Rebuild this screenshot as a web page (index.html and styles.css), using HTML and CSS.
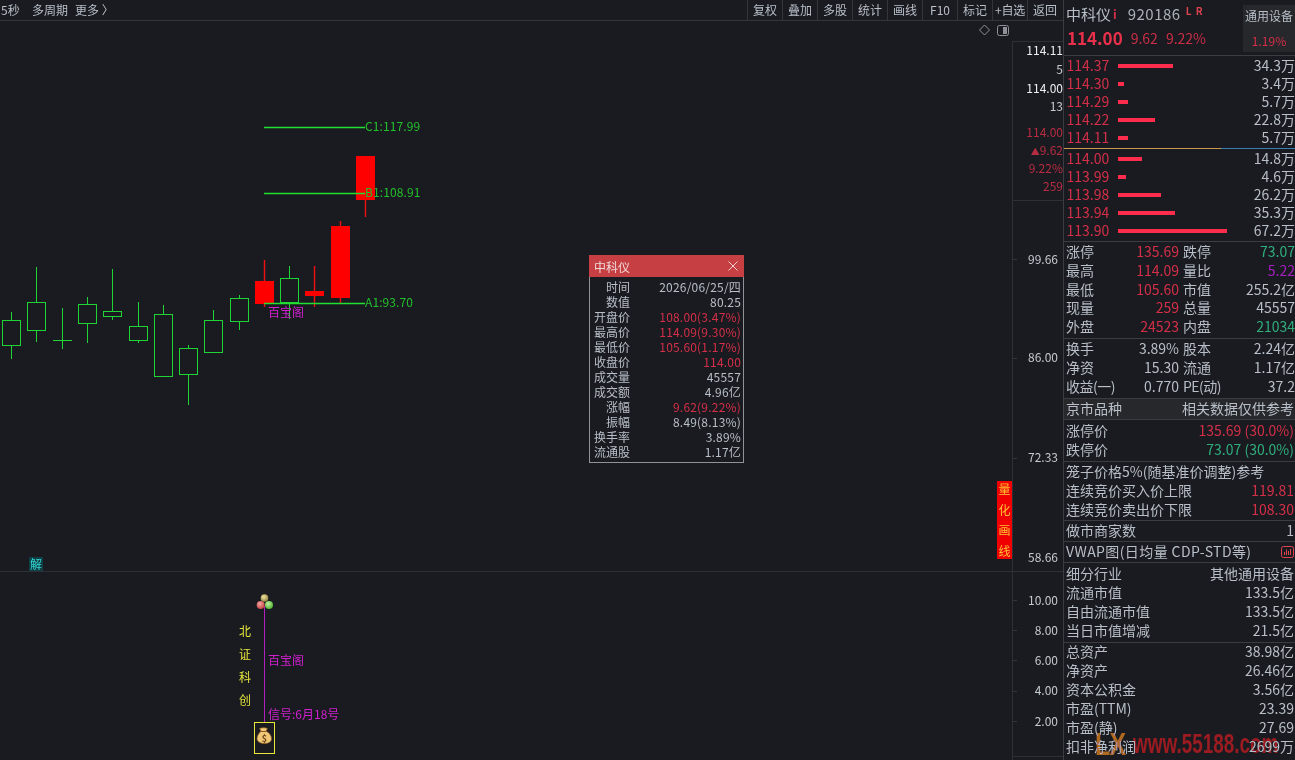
FILE: index.html
```html
<!DOCTYPE html>
<html lang="zh-CN">
<head>
    <meta charset="UTF-8">
    <meta name="viewport" content="width=device-width, initial-scale=1.0">
    <title>中科仪 920186</title>
    <link rel="stylesheet" href="styles.css">
</head>
<body>
<div class="app">
    <div class="main">
        <div class="topbar">
            <div class="topbar-left">
                <span class="period">5秒</span>
                <span class="period-more">多周期</span>
                <span>更多 〉</span>
            </div>
            <div class="tools">
                <span class="tool">复权</span>
                <span class="tool">叠加</span>
                <span class="tool">多股</span>
                <span class="tool">统计</span>
                <span class="tool">画线</span>
                <span class="tool">F10</span>
                <span class="tool">标记</span>
                <span class="tool tool-tight">+自选</span>
                <span class="tool">返回</span>
            </div>
        </div>

        <div class="chart">
            <svg class="chart-svg" width="1063" height="740" viewBox="0 20 1063 740">
                <defs>
                    <radialGradient id="ballTop" cx="0.4" cy="0.35" r="0.7"><stop offset="0" stop-color="#f0e4a0"/><stop offset="1" stop-color="#8f7f3c"/></radialGradient>
                    <radialGradient id="ballRed" cx="0.4" cy="0.35" r="0.7"><stop offset="0" stop-color="#f4a8a0"/><stop offset="1" stop-color="#c23c3c"/></radialGradient>
                    <radialGradient id="ballGreen" cx="0.4" cy="0.35" r="0.7"><stop offset="0" stop-color="#c0f0a0"/><stop offset="1" stop-color="#4cb030"/></radialGradient>
                </defs>

                <!-- frame -->
                <line class="grid" x1="1012.5" y1="41" x2="1012.5" y2="760"/>
                <line class="grid" x1="1012" y1="41.5" x2="1063" y2="41.5"/>
                <line class="grid" x1="1012" y1="200.5" x2="1063" y2="200.5"/>
                <line class="grid" x1="0" y1="571.5" x2="1063" y2="571.5"/>
                <line class="grid" x1="1012" y1="756.5" x2="1063" y2="756.5"/>
                <line class="tick" x1="1013" y1="259.5" x2="1017" y2="259.5"/>
                <line class="tick" x1="1013" y1="358.5" x2="1017" y2="358.5"/>
                <line class="tick" x1="1013" y1="458.5" x2="1017" y2="458.5"/>
                <line class="tick" x1="1013" y1="600.5" x2="1017" y2="600.5"/>
                <line class="tick" x1="1013" y1="630.5" x2="1017" y2="630.5"/>
                <line class="tick" x1="1013" y1="660.5" x2="1017" y2="660.5"/>
                <line class="tick" x1="1013" y1="691.5" x2="1017" y2="691.5"/>
                <line class="tick" x1="1013" y1="721.5" x2="1017" y2="721.5"/>

                <!-- top right icons -->
                <path class="icon" d="M984.5 25l5 5-5 5-5-5z"/>
                <rect class="icon" x="997.5" y="25.5" width="11" height="10" rx="2"/>
                <rect class="icon-fill" x="1003" y="27" width="4" height="7"/>

                <!-- falling candles -->
                <g class="wick-up">
                    <line x1="11.5" y1="312" x2="11.5" y2="359"/>
                    <line x1="36.5" y1="267" x2="36.5" y2="342"/>
                    <line x1="62.5" y1="308" x2="62.5" y2="349"/>
                    <line x1="53" y1="340.5" x2="72" y2="340.5"/>
                    <line x1="87.5" y1="297" x2="87.5" y2="343"/>
                    <line x1="112.5" y1="269" x2="112.5" y2="320"/>
                    <line x1="138.5" y1="302" x2="138.5" y2="343"/>
                    <line x1="163.5" y1="305" x2="163.5" y2="320"/>
                    <line x1="188.5" y1="345" x2="188.5" y2="405"/>
                    <line x1="213.5" y1="310" x2="213.5" y2="325"/>
                    <line x1="239.5" y1="295" x2="239.5" y2="330"/>
                    <line x1="289.5" y1="266" x2="289.5" y2="319"/>
                </g>
                <g class="body-up">
                    <rect x="2.5" y="320.5" width="18" height="25"/>
                    <rect x="27.5" y="302.5" width="18" height="28"/>
                    <rect x="78.5" y="304.5" width="18" height="19"/>
                    <rect x="103.5" y="311.5" width="18" height="5"/>
                    <rect x="129.5" y="326.5" width="18" height="14"/>
                    <rect x="154.5" y="314.5" width="18" height="62"/>
                    <rect x="179.5" y="348.5" width="18" height="26"/>
                    <rect x="204.5" y="320.5" width="18" height="32"/>
                    <rect x="230.5" y="298.5" width="18" height="23"/>
                    <rect x="280.5" y="278.5" width="18" height="24"/>
                </g>

                <!-- rising candles -->
                <g class="wick-down">
                    <line x1="264.5" y1="260" x2="264.5" y2="307"/>
                    <line x1="314.5" y1="266" x2="314.5" y2="307"/>
                    <line x1="340.5" y1="221" x2="340.5" y2="303"/>
                    <line x1="365.5" y1="156" x2="365.5" y2="217"/>
                </g>
                <g class="body-down">
                    <rect x="255" y="281" width="19" height="23"/>
                    <rect x="305" y="291" width="19" height="5"/>
                    <rect x="331" y="226" width="19" height="72"/>
                    <rect x="356" y="156" width="19" height="44"/>
                </g>

                <!-- levels -->
                <g class="level">
                    <line x1="264" y1="127.5" x2="365" y2="127.5"/>
                    <line x1="264" y1="193.5" x2="365" y2="193.5"/>
                    <line x1="264" y1="303.5" x2="365" y2="303.5"/>
                </g>
                <text class="level-text" x="365" y="131">C1:117.99</text>
                <text class="level-text" x="365" y="197">B1:108.91</text>
                <text class="level-text" x="365" y="307">A1:93.70</text>
                <text class="signal-text" x="268" y="317">百宝阁</text>

                <!-- price axis -->
                <text class="axis axis-hi" x="1063" y="55">114.11</text>
                <text class="axis" x="1063" y="74">5</text>
                <text class="axis axis-hi" x="1063" y="93">114.00</text>
                <text class="axis" x="1063" y="111">13</text>
                <text class="axis axis-red" x="1063" y="137">114.00</text>
                <text class="axis axis-red" x="1063" y="155"><tspan class="axis-arrow">▲</tspan>9.62</text>
                <text class="axis axis-red" x="1063" y="173">9.22%</text>
                <text class="axis axis-red" x="1063" y="191">259</text>
                <text class="axis" x="1058" y="264">99.66</text>
                <text class="axis" x="1058" y="362">86.00</text>
                <text class="axis" x="1058" y="462">72.33</text>
                <text class="axis" x="1058" y="562">58.66</text>
                <text class="axis" x="1058" y="605">10.00</text>
                <text class="axis" x="1058" y="635">8.00</text>
                <text class="axis" x="1058" y="665">6.00</text>
                <text class="axis" x="1058" y="695">4.00</text>
                <text class="axis" x="1058" y="726">2.00</text>

                <!-- 解 marker -->
                <rect class="jie-bg" x="29" y="557" width="14" height="14"/>
                <text class="jie" x="36" y="569">解</text>

                <!-- lower pane -->
                <line class="signal-line" x1="264.5" y1="606" x2="264.5" y2="722"/>
                <circle fill="url(#ballTop)" cx="264.5" cy="598" r="3.8"/>
                <circle fill="url(#ballRed)" cx="260.7" cy="605" r="4"/>
                <circle fill="url(#ballGreen)" cx="269" cy="605" r="4"/>
                <text class="side-text" x="245" y="636">北</text>
                <text class="side-text" x="245" y="659">证</text>
                <text class="side-text" x="245" y="682">科</text>
                <text class="side-text" x="245" y="705">创</text>
                <text class="signal-text" x="268" y="665">百宝阁</text>
                <text class="signal-text" x="268" y="719">信号:6月18号</text>
                <rect class="bag-box" x="254.5" y="722.5" width="20" height="31"/>
                <path class="bag" d="M261 731l-1.500-2.500c2-1 6-1 8 0L266 731c3 1.500 5.500 4.500 5.500 7.500 0 3.500-3 5-7 5s-7.500-1.500-7.500-5c0-3 2.500-6 4-7.500z"/>
                <line class="bag-tie" x1="261" y1="731.500" x2="266" y2="731.500"/>
                <text class="bag-sign" x="264.500" y="742">$</text>
            </svg>

            <div class="draw-tag">
                <span>量</span><span>化</span><span>画</span><span>线</span>
            </div>

            <div class="tip">
                <div class="tip-head">
                    <span>中科仪</span>
                    <svg class="tip-close" width="10" height="10" viewBox="0 0 10 10"><path d="M0.500 0.500l9 9M9.500 0.500l-9 9"/></svg>
                </div>
                <div class="tip-body">
                    <span class="tip-k">时间</span><span class="tip-v">2026/06/25/四</span>
                    <span class="tip-k">数值</span><span class="tip-v">80.25</span>
                    <span class="tip-k">开盘价</span><span class="tip-v red">108.00(3.47%)</span>
                    <span class="tip-k">最高价</span><span class="tip-v red">114.09(9.30%)</span>
                    <span class="tip-k">最低价</span><span class="tip-v red">105.60(1.17%)</span>
                    <span class="tip-k">收盘价</span><span class="tip-v red">114.00</span>
                    <span class="tip-k">成交量</span><span class="tip-v">45557</span>
                    <span class="tip-k">成交额</span><span class="tip-v">4.96亿</span>
                    <span class="tip-k">涨幅</span><span class="tip-v red">9.62(9.22%)</span>
                    <span class="tip-k">振幅</span><span class="tip-v">8.49(8.13%)</span>
                    <span class="tip-k">换手率</span><span class="tip-v">3.89%</span>
                    <span class="tip-k">流通股</span><span class="tip-v">1.17亿</span>
                </div>
            </div>
        </div>
    </div>

    <div class="side">
        <div class="sec sec-head">
            <div class="head-info">
                <div class="head-name">
                    <span class="name">中科仪</span><span class="name-i">i</span>
                    <span class="code">920186</span>
                    <span class="flags">L R</span>
                </div>
                <div class="head-price">
                    <span class="price">114.00</span>
                    <span class="change">9.62</span>
                    <span class="change">9.22%</span>
                </div>
            </div>
            <div class="sector">
                <span>通用设备</span>
                <span class="red">1.19%</span>
            </div>
        </div>

        <div class="sec-book">
            <div class="book">
                <div class="book-row"><span class="book-price">114.37</span><span class="book-bar"><i style="width:55px"></i></span><span class="book-vol">34.3万</span></div>
                <div class="book-row"><span class="book-price">114.30</span><span class="book-bar"><i style="width:6px"></i></span><span class="book-vol">3.4万</span></div>
                <div class="book-row"><span class="book-price">114.29</span><span class="book-bar"><i style="width:10px"></i></span><span class="book-vol">5.7万</span></div>
                <div class="book-row"><span class="book-price">114.22</span><span class="book-bar"><i style="width:37px"></i></span><span class="book-vol">22.8万</span></div>
                <div class="book-row"><span class="book-price">114.11</span><span class="book-bar"><i style="width:10px"></i></span><span class="book-vol">5.7万</span></div>
            </div>
            <div class="book-split"></div>
            <div class="book">
                <div class="book-row"><span class="book-price">114.00</span><span class="book-bar"><i style="width:24px"></i></span><span class="book-vol">14.8万</span></div>
                <div class="book-row"><span class="book-price">113.99</span><span class="book-bar"><i style="width:8px"></i></span><span class="book-vol">4.6万</span></div>
                <div class="book-row"><span class="book-price">113.98</span><span class="book-bar"><i style="width:43px"></i></span><span class="book-vol">26.2万</span></div>
                <div class="book-row"><span class="book-price">113.94</span><span class="book-bar"><i style="width:57px"></i></span><span class="book-vol">35.3万</span></div>
                <div class="book-row"><span class="book-price">113.90</span><span class="book-bar"><i style="width:109px"></i></span><span class="book-vol">67.2万</span></div>
            </div>
        </div>

        <div class="sec sec-quote quote">
            <span>涨停</span><span class="val red">135.69</span><span class="key2">跌停</span><span class="val green">73.07</span>
            <span>最高</span><span class="val red">114.09</span><span class="key2">量比</span><span class="val purple">5.22</span>
            <span>最低</span><span class="val red">105.60</span><span class="key2">市值</span><span class="val">255.2亿</span>
            <span>现量</span><span class="val red">259</span><span class="key2">总量</span><span class="val">45557</span>
            <span>外盘</span><span class="val red">24523</span><span class="key2">内盘</span><span class="val green">21034</span>
        </div>

        <div class="sec sec-fund quote">
            <span>换手</span><span class="val">3.89%</span><span class="key2">股本</span><span class="val">2.24亿</span>
            <span>净资</span><span class="val">15.30</span><span class="key2">流通</span><span class="val">1.17亿</span>
            <span class="tight">收益(一)</span><span class="val">0.770</span><span class="key2 tight">PE(动)</span><span class="val">37.2</span>
        </div>

        <div class="sec sec-band">
            <div class="row"><span>京市品种</span><span>相关数据仅供参考</span></div>
        </div>

        <div class="sec sec-limit">
            <div class="row"><span>涨停价</span><span class="red">135.69 (30.0%)</span></div>
            <div class="row"><span>跌停价</span><span class="green">73.07 (30.0%)</span></div>
        </div>

        <div class="sec sec-cage">
            <div class="row"><span>笼子价格5%(随基准价调整)参考</span></div>
            <div class="row"><span>连续竞价买入价上限</span><span class="red">119.81</span></div>
            <div class="row"><span>连续竞价卖出价下限</span><span class="red">108.30</span></div>
        </div>

        <div class="sec sec-one">
            <div class="row"><span>做市商家数</span><span>1</span></div>
        </div>

        <div class="sec sec-one">
            <div class="row">
                <span class="vwap">VWAP图(日均量 CDP-STD等)</span>
                <svg class="vwap-icon" width="13" height="12" viewBox="0 0 13 12">
                    <rect x="0.500" y="0.500" width="12" height="11" rx="2"/>
                    <path d="M3.500 9V6M5.500 9V3.500M7.500 9V5M9.500 9V3"/>
                </svg>
            </div>
        </div>

        <div class="sec sec-ind">
            <div class="row"><span>细分行业</span><span>其他通用设备</span></div>
            <div class="row"><span>流通市值</span><span>133.5亿</span></div>
            <div class="row"><span>自由流通市值</span><span>133.5亿</span></div>
            <div class="row"><span>当日市值增减</span><span>21.5亿</span></div>
        </div>

        <div class="sec-fin">
            <div class="row"><span>总资产</span><span>38.98亿</span></div>
            <div class="row"><span>净资产</span><span>26.46亿</span></div>
            <div class="row"><span>资本公积金</span><span>3.56亿</span></div>
            <div class="row"><span>市盈(TTM)</span><span>23.39</span></div>
            <div class="row"><span>市盈(静)</span><span>27.69</span></div>
            <div class="row"><span>扣非净利润</span><span>2699万</span></div>
        </div>

        <div class="watermark"><span class="wm-lx">LX</span><span class="wm-url">www.55188.com</span></div>
    </div>
</div>
</body>
</html>
```

FILE: styles.css
```css
* {
    box-sizing: border-box;
}
html, body {
    margin: 0;
    height: 100%;
    overflow: hidden;
}
body {
    background-color: #1a1b20;
    color: #b8bfc8;
    font-family: "Noto Sans CJK SC", "Liberation Sans", sans-serif;
    font-size: 14px;
}
.red { color: #d42f48; }
.green { color: #2fae7c; }
.purple { color: #a61fc0; }

.app {
    display: flex;
    width: 1295px;
    height: 760px;
}
.main {
    width: 1063px;
    display: flex;
    flex-direction: column;
}

/* top bar */
.topbar {
    height: 21px;
    display: flex;
    justify-content: space-between;
    border-bottom: 1px solid #33353a;
    font-size: 12px;
    line-height: 20px;
}
.topbar-left {
    display: flex;
    padding-left: 1px;
    white-space: nowrap;
}
.period { width: 31px; }
.period-more { width: 43px; }
.tools {
    display: flex;
    padding-right: 1px;
}
.tool {
    width: 35px;
    text-align: center;
    border-left: 1px solid #33353a;
    white-space: nowrap;
}
.tool-tight {
    letter-spacing: -0.3px;
}

/* chart */
.chart {
    position: relative;
    height: 739px;
}
.chart-svg {
    display: block;
    margin-top: -1px;
}
.chart-svg text {
    font-family: "Noto Sans CJK SC", "Liberation Sans", sans-serif;
}
.chart-svg line {
    shape-rendering: crispEdges;
}
.grid { stroke: #2e3035; }
.tick { stroke: #33353a; }
.icon { fill: none; stroke: #8d9298; }
.icon-fill { fill: #8d9298; }
.wick-up line { stroke: #20d435; }
.body-up rect {
    fill: #1a1b20;
    stroke: #20d435;
}
.wick-down line {
    stroke: #f01010;
    stroke-width: 1.4;
    shape-rendering: auto;
}
.body-down rect { fill: #ff0000; }
.level line {
    stroke: #20e030;
    stroke-width: 1.5;
    shape-rendering: auto;
}
.level-text {
    fill: #22c02c;
    font-size: 12px;
    letter-spacing: 0.1px;
}
.signal-text {
    fill: #d020d0;
    font-size: 12px;
}
.axis {
    fill: #c4cad0;
    font-size: 12px;
    text-anchor: end;
}
.axis-hi { fill: #eceef0; }
.axis-red { fill: #b82c42; }
.axis-arrow { font-size: 9px; }
.jie-bg { fill: #0d3f44; }
.jie {
    fill: #34d3d3;
    font-size: 12px;
    text-anchor: middle;
}
.signal-line { stroke: #b01fc0; }
.side-text {
    fill: #e4e43a;
    font-size: 12px;
    text-anchor: middle;
}
.bag-box {
    fill: none;
    stroke: #e8e83a;
}
.bag { fill: #f0c878; stroke: #8a5a20; stroke-width: 0.7; }
.bag-tie { stroke: #8a5a20; }
.bag-sign {
    fill: #6b4518;
    font-size: 9px;
    font-weight: 700;
    text-anchor: middle;
}

.draw-tag {
    position: absolute;
    left: 997px;
    top: 460px;
    width: 15px;
    height: 78px;
    display: flex;
    flex-direction: column;
    justify-content: space-between;
    align-items: center;
    background-color: #f00000;
    color: #ffc433;
    font-size: 12px;
    line-height: 16px;
}

/* tooltip */
.tip {
    position: absolute;
    left: 589px;
    top: 234px;
    width: 155px;
    height: 208px;
    background-color: #1a1b20;
    border: 1px solid #8f9296;
}
.tip-head {
    height: 22px;
    margin: -1px -1px 0;
    padding: 0 5px;
    display: flex;
    justify-content: space-between;
    align-items: center;
    background-color: #c63f42;
    color: #f0d8d8;
    font-size: 12px;
}
.tip-close {
    margin-right: 1px;
}
.tip-close path {
    fill: none;
    stroke: #f0d0d0;
}
.tip-body {
    display: grid;
    grid-template-columns: 40px 1fr;
    grid-auto-rows: 15px;
    padding: 2px 2px 0 0;
    font-size: 12px;
    line-height: 15px;
}
.tip-k { text-align: right; }
.tip-v {
    text-align: right;
    letter-spacing: 0.2px;
}

/* side panel */
.side {
    position: relative;
    width: 232px;
    border-left: 1px solid #3a3c41;
}
.sec {
    display: flex;
    flex-direction: column;
    justify-content: center;
    border-bottom: 1px solid #3a3c41;
}
.row {
    height: 19px;
    padding: 0 1px 2px 2px;
    display: flex;
    justify-content: space-between;
    align-items: center;
    line-height: 17px;
    white-space: nowrap;
}

.sec-head {
    height: 56px;
    flex-direction: row;
    justify-content: space-between;
}
.head-info {
    padding-left: 2px;
}
.head-name {
    height: 24px;
    margin-top: 1px;
    display: flex;
    align-items: center;
    font-size: 15px;
}
.name-i {
    margin-left: 2px;
    color: #d42f48;
    font-weight: 700;
    font-size: 12px;
}
.code {
    margin-left: 11px;
    font-size: 15px;
    letter-spacing: 0.5px;
    color: #aab0b8;
}
.flags {
    margin: -5px 0 0 5px;
    color: #d9434f;
    font-size: 10px;
    font-weight: 700;
    letter-spacing: 1px;
}
.head-price {
    height: 25px;
    display: flex;
    align-items: center;
    gap: 8px;
    color: #c92e46;
}
.price {
    margin-left: 1px;
    color: #e8304a;
    font-size: 17px;
    font-weight: 700;
}
.sector {
    width: 52px;
    height: 47px;
    margin-top: 5px;
    align-self: flex-start;
    padding-top: 2px;
    display: flex;
    flex-direction: column;
    align-items: center;
    gap: 8px;
    background-color: #26282c;
    font-size: 12px;
    line-height: 17px;
}

.sec-book {
    height: 186px;
    display: flex;
    flex-direction: column;
    border-bottom: 1px solid #3a3c41;
}
.book {
    height: 92px;
}
.book-row {
    height: 18px;
    display: flex;
    align-items: center;
    line-height: 18px;
    white-space: nowrap;
}
.book-price {
    width: 54px;
    margin-top: -1px;
    padding-left: 2.5px;
    color: #d42f48;
}
.book-vol {
    margin-top: -1px;
}
.book-bar {
    flex: 1;
    display: flex;
}
.book-bar i {
    display: block;
    height: 4px;
    margin-top: 1px;
    background-color: #ff2d4d;
}
.book-split {
    flex: none;
    height: 1px;
    background: linear-gradient(to right, #c99a4c 0, #c99a4c 157px, #3b7fb0 157px);
}

.quote {
    display: grid;
    grid-template-columns: 46px 67px 38px 1fr;
    align-content: center;
    padding: 0 0 0 2px;
    line-height: 17px;
    white-space: nowrap;
}
.quote .val { text-align: right; }
.quote .key2 { padding-left: 4px; }
.sec-quote {
    height: 97px;
    grid-auto-rows: 18.75px;
}
.sec-fund {
    height: 60px;
    grid-auto-rows: 19px;
}
.tight { letter-spacing: -0.5px; }
.sec-band {
    height: 21px;
    background-color: #26282c;
}
.sec-limit { height: 42px; }
.sec-cage { height: 59px; }
.sec-one { height: 21px; }
.sec-ind { height: 80px; }
.vwap { letter-spacing: 0.4px; }
.vwap-icon {
    margin-top: 2px;
}
.vwap-icon rect, .vwap-icon path {
    fill: none;
    stroke: #e0444f;
}

/* site mark */
.watermark {
    position: absolute;
    left: 31px;
    top: 729px;
    display: flex;
    align-items: center;
    font-family: "Liberation Sans", sans-serif;
    font-weight: 700;
    font-size: 27px;
    line-height: 30px;
    white-space: nowrap;
    pointer-events: none;
}
.wm-lx {
    width: 38px;
    color: #b06a10;
    font-size: 32px;
    letter-spacing: -1px;
    transform: scaleX(0.78);
    transform-origin: left center;
    mix-blend-mode: lighten;
}
.wm-url {
    color: #9c1010;
    display: inline-block;
    transform: scaleX(0.7);
    transform-origin: left center;
    mix-blend-mode: lighten;
}
```
